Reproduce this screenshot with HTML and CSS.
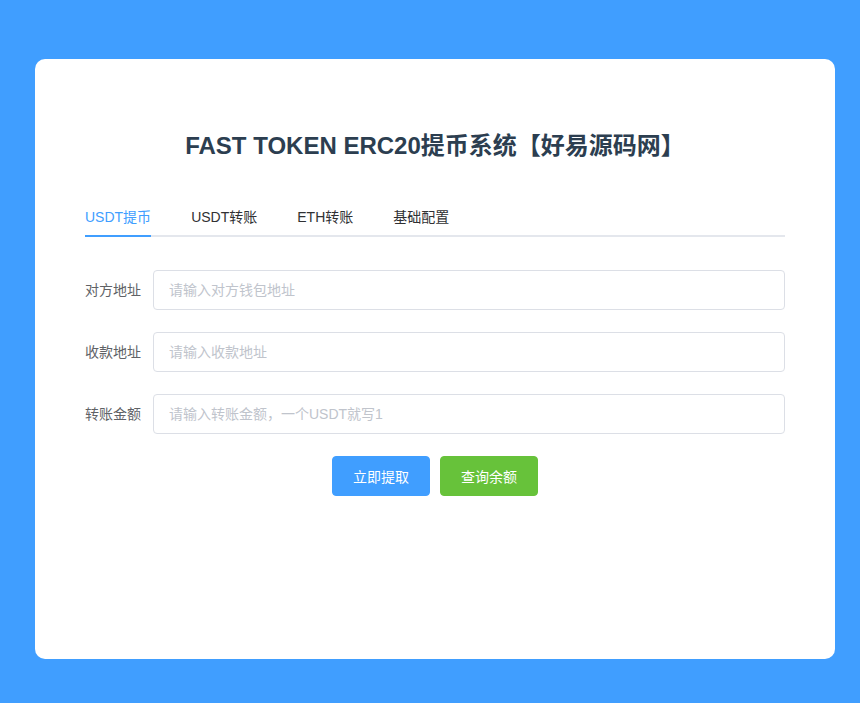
FILE: index.html
```html
<!DOCTYPE html>
<html lang="zh-CN">
<head>
<meta charset="utf-8">
<title>FAST TOKEN ERC20提币系统</title>
<link rel="stylesheet" href="styles.css">
</head>
<body>
<div class="page">
  <div class="card">
    <h1 class="title">FAST TOKEN ERC20提币系统【好易源码网】</h1>
    <div class="tabs">
      <div class="tab active"><span class="tab-label">USDT提币</span></div>
      <div class="tab"><span class="tab-label">USDT转账</span></div>
      <div class="tab"><span class="tab-label">ETH转账</span></div>
      <div class="tab"><span class="tab-label">基础配置</span></div>
    </div>
    <form class="form">
      <div class="row">
        <label class="label">对方地址</label>
        <input class="input" type="text" placeholder="请输入对方钱包地址">
      </div>
      <div class="row">
        <label class="label">收款地址</label>
        <input class="input" type="text" placeholder="请输入收款地址">
      </div>
      <div class="row">
        <label class="label">转账金额</label>
        <input class="input" type="text" placeholder="请输入转账金额，一个USDT就写1">
      </div>
      <div class="actions">
        <button type="button" class="btn btn-primary">立即提取</button>
        <button type="button" class="btn btn-success">查询余额</button>
      </div>
    </form>
  </div>
</div>
</body>
</html>
```
FILE: styles.css
```css
html, body {
  margin: 0;
  padding: 0;
  height: 100%;
}
body {
  background: #409eff;
  font-family: "Liberation Sans", "Noto Sans CJK SC", sans-serif;
  font-size: 14px;
  color: #303133;
}
.page {
  padding: 59px 25px 0 35px;
}
.card {
  box-sizing: border-box;
  width: 800px;
  height: 600px;
  background: #fff;
  border-radius: 10px;
  padding: 71px 50px 0 50px;
}
.title {
  margin: 0;
  text-align: center;
  font-size: 24px;
  line-height: 32px;
  font-weight: bold;
  color: #2c3e50;
}
.tabs {
  display: flex;
  margin-top: 35px;
  height: 38px;
  border-bottom: 2px solid #e4e7ed;
}
.tab {
  padding: 0 20px;
  height: 40px;
  color: #303133;
  font-size: 14px;
}
.tab:first-child {
  padding-left: 0;
}
.tab-label {
  display: block;
  box-sizing: border-box;
  height: 40px;
  line-height: 40px;
  border-bottom: 2px solid transparent;
}
.tab.active {
  color: #409eff;
}
.tab.active .tab-label {
  border-bottom-color: #409eff;
}
.form {
  margin-top: 33px;
}
.row {
  display: flex;
  margin-bottom: 22px;
}
.label {
  width: 68px;
  flex: none;
  box-sizing: border-box;
  padding-right: 12px;
  line-height: 40px;
  color: #606266;
  font-size: 14px;
  text-align: right;
}
.input {
  flex: 1;
  box-sizing: border-box;
  height: 40px;
  border: 1px solid #dcdfe6;
  border-radius: 4px;
  padding: 0 15px;
  font-family: inherit;
  font-size: 14px;
  color: #606266;
  outline: none;
  background: #fff;
}
.input::placeholder {
  color: #c0c4cc;
}
.actions {
  display: flex;
  justify-content: center;
  gap: 10px;
}
.btn {
  height: 40px;
  padding: 0 20px;
  border: 1px solid transparent;
  border-radius: 4px;
  font-family: inherit;
  font-size: 14px;
  color: #fff;
  cursor: pointer;
}
.btn-primary {
  background: #409eff;
  border-color: #409eff;
}
.btn-success {
  background: #67c23a;
  border-color: #67c23a;
}
```
